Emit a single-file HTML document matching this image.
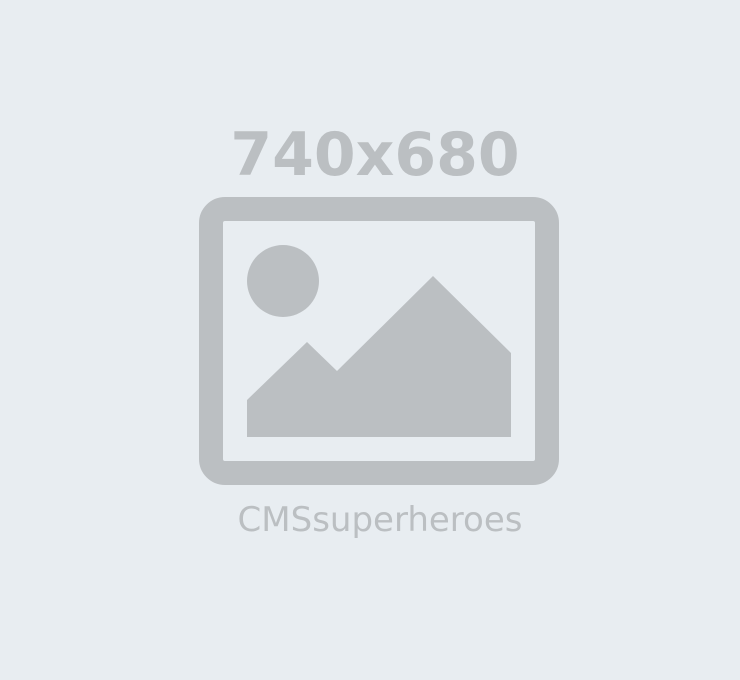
<!DOCTYPE html>
<html><head><style>
html,body{margin:0;padding:0;width:740px;height:680px;background:#e8edf1;overflow:hidden}
.t{position:absolute;width:740px;text-align:center;font-family:"DejaVu Sans","Liberation Sans",sans-serif;color:#bbbfc2}
</style></head><body>
<div class="t" style="left:5px;top:117px;font-size:60px;font-weight:bold;line-height:76px">740x680</div>
<svg style="position:absolute;left:0;top:0" width="740" height="680">
<rect x="211" y="209" width="336" height="264" rx="14" fill="none" stroke="#bbbfc2" stroke-width="24"/>
<circle cx="283" cy="281" r="36" fill="#bbbfc2"/>
<polygon points="247,400 307,342 337,371 433,276 511,353 511,437 247,437" fill="#bbbfc2"/>
</svg>
<div class="t" style="left:10px;top:497px;font-size:34px;line-height:46px">CMSsuperheroes</div>
</body></html>
